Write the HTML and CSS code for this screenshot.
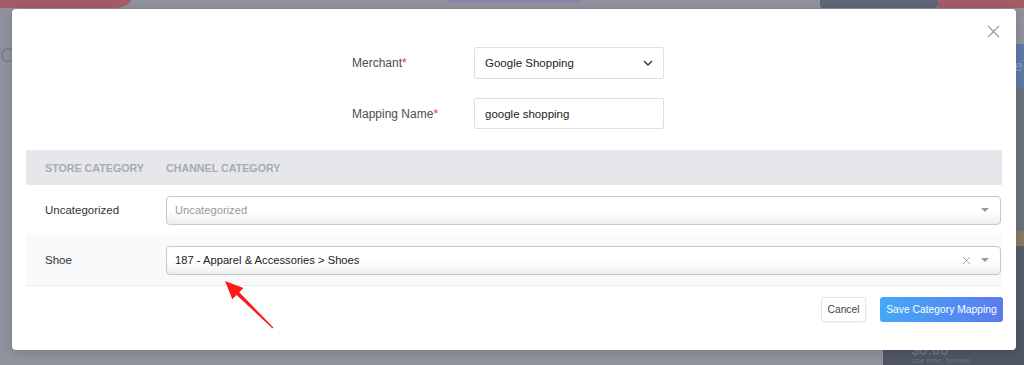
FILE: index.html
```html
<!DOCTYPE html>
<html>
  <head>
    <title>Category Mapping</title>
    <link rel="stylesheet" href="styles.css">
  </head>
  <body>
    <div class="page">
      <div class="page-pill"></div>
      <div class="page-tab"></div>
      <div class="page-dark"></div>
      <div class="page-red"></div>
      <div class="page-title">Ca</div>
      <div class="side-blue">te</div>
      <div class="side-gray"></div>
      <div class="side-band"></div>
      <div class="side-dark"></div>
      <div class="price-card">
        <div class="price">$0.00</div>
        <div class="price-note">one time, forever</div>
      </div>
    </div>

    <div class="modal">
      <button class="close" aria-label="Close">
        <svg width="13" height="13" viewBox="0 0 13 13"><path d="M1 1L12 12M12 1L1 12" stroke="#9a9a9a" stroke-width="1.2" fill="none"/></svg>
      </button>

      <div class="form">
        <div class="form-row">
          <label class="form-label">Merchant<span class="req">*</span></label>
          <div class="select-box">
            <span>Google Shopping</span>
            <svg width="10" height="6" viewBox="0 0 10 6"><path d="M1 1L5 5L9 1" stroke="#333" stroke-width="1.4" fill="none"/></svg>
          </div>
        </div>
        <div class="form-row">
          <label class="form-label">Mapping Name<span class="req">*</span></label>
          <div class="text-input">google shopping</div>
        </div>
      </div>

      <div class="mapping">
        <div class="mapping-head">
          <div class="col-store">Store Category</div>
          <div class="col-channel">Channel Category</div>
        </div>
        <div class="mapping-row">
          <div class="col-store">Uncategorized</div>
          <div class="col-channel">
            <div class="s2">
              <span class="s2-placeholder">Uncategorized</span>
              <span class="s2-arrow"></span>
            </div>
          </div>
        </div>
        <div class="mapping-row alt">
          <div class="col-store">Shoe</div>
          <div class="col-channel">
            <div class="s2">
              <span class="s2-value">187 - Apparel &amp; Accessories &gt; Shoes</span>
              <svg class="s2-clear" width="9" height="9" viewBox="0 0 9 9"><path d="M1 1L8 8M8 1L1 8" stroke="#a8a8a8" stroke-width="1" fill="none"/></svg>
              <span class="s2-arrow"></span>
            </div>
          </div>
        </div>
      </div>

      <div class="footer">
        <button class="btn btn-cancel">Cancel</button>
        <button class="btn btn-save">Save Category Mapping</button>
      </div>

      <svg class="pointer" width="300" height="341" viewBox="0 0 300 341">
        <polygon fill="#ff1a1a" points="213,272 231.5,278.9 227.3,283.2 261.4,318.6 260.6,319.4 224.5,286 220.3,290.3"/>
      </svg>
    </div>
  </body>
</html>
```

FILE: styles.css
```css
body {
  margin: 0;
  background-color: #8f919d;
  font-family: "Liberation Sans", Helvetica, Arial, sans-serif;
  height: 365px;
  overflow: hidden;
}

/* dimmed page behind the dialog */
.page-pill {
  position: absolute;
  left: -20px;
  top: -30px;
  width: 155px;
  height: 38px;
  border-radius: 19px;
  background-color: #a35b67;
}

.page-tab {
  position: absolute;
  left: 447px;
  top: 0;
  width: 134px;
  height: 2px;
  background-color: #8b80ae;
}

.page-dark {
  position: absolute;
  left: 820px;
  top: 0;
  width: 118px;
  height: 8px;
  background-color: #5f6574;
  border-radius: 0 0 3px 3px;
}

.page-red {
  position: absolute;
  left: 938px;
  top: 0;
  width: 86px;
  height: 8px;
  background-color: #a35b67;
}

.page-title {
  position: absolute;
  left: 0;
  top: 44px;
  font-size: 20px;
  color: #7b7e8a;
}

.side-blue {
  position: absolute;
  left: 1010px;
  top: 44px;
  width: 14px;
  height: 44px;
  background-color: #5e77a4;
  color: #8fa0c2;
  font-size: 15px;
  line-height: 44px;
}

.side-gray {
  position: absolute;
  left: 1010px;
  top: 88px;
  width: 14px;
  height: 143px;
  background-color: #6c707d;
}

.side-band {
  position: absolute;
  left: 1010px;
  top: 231px;
  width: 14px;
  height: 15px;
  background-color: #857a63;
}

.side-dark {
  position: absolute;
  left: 1010px;
  top: 246px;
  width: 14px;
  height: 120px;
  background-color: #565c6a;
}

.price-card {
  position: absolute;
  left: 883px;
  top: 320px;
  width: 141px;
  height: 45px;
  background-color: #4f5563;
  padding: 24px 0 0 28px;
  box-sizing: border-box;
  color: #6b7180;
}

.price {
  font-size: 15px;
  font-weight: 700;
  line-height: 12px;
}

.price-note {
  font-size: 8px;
  line-height: 9px;
}

/* dialog */
.modal {
  position: relative;
  margin: 9px 8px 0 12px;
  height: 341px;
  background-color: #fff;
  border-radius: 4px;
  box-shadow: 0 2px 10px rgba(0, 0, 0, 0.15);
  box-sizing: border-box;
  padding: 38px 14px 0 14px;
}

.close {
  position: absolute;
  top: 16px;
  right: 16px;
  border: 0;
  background: none;
  padding: 0;
}

.form {
  margin-bottom: 21px;
}

.form-row {
  display: flex;
  align-items: center;
}

.form-row + .form-row {
  margin-top: 19px;
}

.form-label {
  width: 122px;
  margin-left: 326px;
  font-size: 12px;
  color: #4d4d4d;
}

.req {
  color: #e53935;
}

.select-box, .text-input {
  width: 190px;
  height: 32px;
  box-sizing: border-box;
  border: 1px solid #dcdfe3;
  border-radius: 2px;
  padding: 0 10px;
  font-size: 11.5px;
  color: #222;
  display: flex;
  align-items: center;
}

.select-box {
  justify-content: space-between;
}

.text-input {
  height: 31px;
}

.mapping {
  border-bottom: 1px solid #e9ecef;
}

.mapping-head {
  display: flex;
  align-items: center;
  height: 35px;
  background-color: #e5e7ea;
  font-size: 10.7px;
  font-weight: 700;
  text-transform: uppercase;
  color: #a8abb2;
}

.mapping-row {
  display: flex;
  align-items: center;
  height: 50px;
  font-size: 11.5px;
  color: #333;
}

.mapping-row.alt {
  background-color: #f8f9fa;
}

.col-store {
  width: 140px;
  padding-left: 19px;
  box-sizing: border-box;
  flex-shrink: 0;
}

.col-channel {
  flex: 1;
  padding-right: 1px;
}

.s2 {
  display: flex;
  align-items: center;
  height: 29px;
  box-sizing: border-box;
  border: 1px solid #c8c8c8;
  border-radius: 4px;
  background-image: linear-gradient(to bottom, #fff 50%, #eee 100%);
  padding: 0 11px 0 8px;
  font-size: 11.2px;
}

.s2-placeholder {
  color: #999;
  flex: 1;
}

.s2-value {
  color: #222;
  flex: 1;
}

.s2-clear {
  margin-right: 10px;
}

.s2-arrow {
  width: 0;
  height: 0;
  border-left: 4px solid transparent;
  border-right: 4px solid transparent;
  border-top: 4px solid #999;
}

.footer {
  display: flex;
  justify-content: flex-end;
  gap: 14px;
  margin-top: 11px;
  margin-right: -1px;
}

.btn {
  height: 25px;
  font-family: inherit;
  font-size: 10.3px;
  border-radius: 3px;
  padding: 0;
}

.btn-cancel {
  width: 45px;
  background-color: #fff;
  border: 1px solid #e3e5e9;
  color: #444;
  box-shadow: 0 1px 2px rgba(0, 0, 0, 0.05);
}

.btn-save {
  width: 123px;
  border: 0;
  color: #fff;
  background-image: linear-gradient(to right, #44a9f6, #5b7bef);
}

.pointer {
  position: absolute;
  left: 0;
  top: 0;
  pointer-events: none;
}
```
